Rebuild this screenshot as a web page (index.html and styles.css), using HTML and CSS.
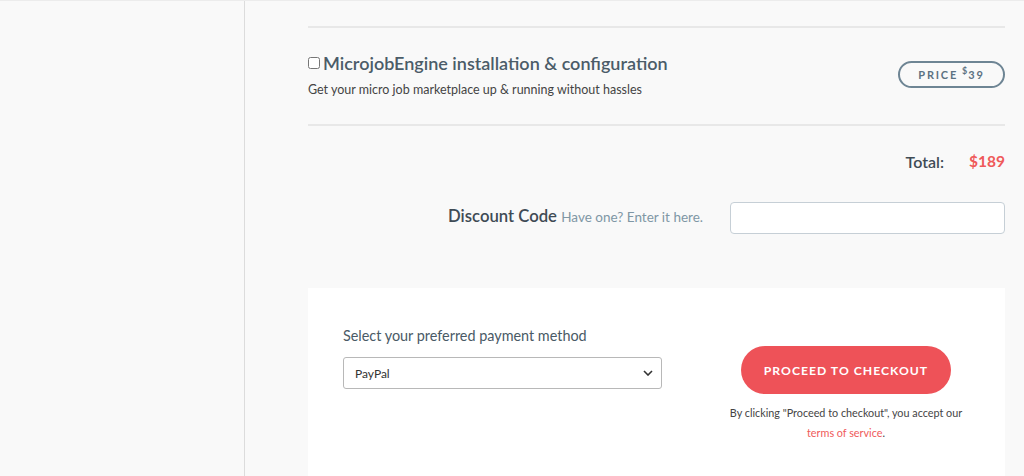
FILE: index.html
```html
<!DOCTYPE html>
<html>
<head>
<meta charset="utf-8">
<link rel="stylesheet" href="styles.css">
</head>
<body>
<div class="page">
  <aside class="sidebar"></aside>
  <main class="main">
    <div class="content">
      <div class="divider"></div>
      <div class="item">
        <div class="item-text">
          <label class="item-title"><input type="checkbox" class="check">MicrojobEngine installation &amp; configuration</label>
          <p class="item-desc">Get your micro job marketplace up &amp; running without hassles</p>
        </div>
        <div class="price">PRICE <span class="cur">$</span>39</div>
      </div>
      <div class="divider"></div>
      <div class="total">
        <span class="total-label">Total:</span>
        <span class="total-value">$189</span>
      </div>
      <div class="discount">
        <div class="discount-label"><strong>Discount Code</strong> <span class="hint">Have one? Enter it here.</span></div>
        <input type="text" class="discount-input">
      </div>
      <div class="card">
        <div class="pay">
          <div class="pay-label">Select your preferred payment method</div>
          <div class="select">
            <span>PayPal</span>
            <svg width="10" height="6" viewBox="0 0 10 6"><path d="M1 1l4 4 4-4" fill="none" stroke="#333" stroke-width="1.6"/></svg>
          </div>
        </div>
        <div class="checkout">
          <button class="btn">PROCEED TO CHECKOUT</button>
          <p class="terms">By clicking "Proceed to checkout", you accept our</p>
          <p class="terms"><a class="tos">terms of service</a>.</p>
        </div>
      </div>
    </div>
  </main>
</div>
</body>
</html>
```
FILE: styles.css
```css
* { box-sizing: border-box; }
html, body { margin: 0; padding: 0; }
body {
  background: #f9f9f9;
  font-family: "Lato", "Liberation Sans", sans-serif;
  color: #4a5a66;
  height: 476px;
  overflow: hidden;
}
.page {
  display: flex;
  height: 476px;
  border-top: 1px solid #ececec;
}
.sidebar {
  width: 245px;
  border-right: 1px solid #dcdcdc;
  flex: none;
}
.main {
  flex: 1;
  padding-left: 63px;
  padding-right: 19px;
}
.content { padding-top: 25px; }
.divider {
  height: 2px;
  background: #e8e8e8;
}
.item {
  display: flex;
  justify-content: space-between;
  align-items: center;
  height: 96px;
  padding-top: 1px;
}
.item-text { margin-top: -4px; }
.item-title {
  display: flex;
  align-items: center;
  font-size: 18px;
  font-weight: 600;
  color: #4b5c68;
}
.check {
  width: 12px;
  height: 12px;
  margin: 0 3px 0 0;
}
.item-desc {
  margin: 8px 0 0;
  font-size: 12.5px;
  color: #444;
}
.price {
  width: 107px;
  height: 27px;
  border: 2px solid #6e8594;
  border-radius: 14px;
  display: flex;
  align-items: center;
  justify-content: center;
  font-size: 11px;
  font-weight: 700;
  letter-spacing: 1.8px;
  color: #5c7282;
  margin-top: -4px;
}
.cur {
  font-size: 9px;
  margin-left: 4px;
  letter-spacing: 1px;
  position: relative;
  top: -4px;
}
.total {
  display: flex;
  justify-content: flex-end;
  align-items: center;
  margin-top: 26px;
  height: 18px;
}
.total-label {
  font-size: 16px;
  font-weight: 600;
  color: #3f4b55;
}
.total-value {
  font-size: 15.5px;
  font-weight: 700;
  color: #ef5a5a;
  width: 61px;
  text-align: right;
}
.discount {
  display: flex;
  justify-content: flex-end;
  align-items: center;
  margin-top: 32px;
}
.discount-label {
  font-size: 16.7px;
  color: #3f4b55;
  margin-right: 27px;
  margin-top: -4px;
}
.discount-label strong { font-weight: 600; }
.hint { font-size: 13.5px; color: #7f97a5; }
.discount-input {
  width: 275px;
  height: 32px;
  border: 1px solid #c6cfd6;
  border-radius: 4px;
  background: #fff;
}
.card {
  background: #fff;
  margin-top: 54px;
  height: 200px;
  display: flex;
  padding: 39px 35px 0 35px;
}
.pay { width: 319px; }
.pay-label { font-size: 14.4px; color: #4a5a66; margin-bottom: 13px; }
.select {
  height: 32px;
  border: 1px solid #b8b8b8;
  border-radius: 3px;
  display: flex;
  align-items: center;
  justify-content: space-between;
  padding: 0 8px 0 11px;
  font-size: 12px;
  color: #333;
}
.checkout {
  flex: 1;
  display: flex;
  flex-direction: column;
  align-items: center;
  padding-top: 19px;
  padding-left: 60px;
}
.btn {
  width: 210px;
  height: 48px;
  border: none;
  border-radius: 24px;
  background: #ee5258;
  color: #fff;
  font-family: inherit;
  font-size: 12.2px;
  font-weight: 700;
  letter-spacing: 1px;
  margin-bottom: 9px;
}
.terms {
  margin: 0;
  font-size: 10.8px;
  color: #444;
  line-height: 20px;
}
.tos { color: #ef5a5a; }
```
